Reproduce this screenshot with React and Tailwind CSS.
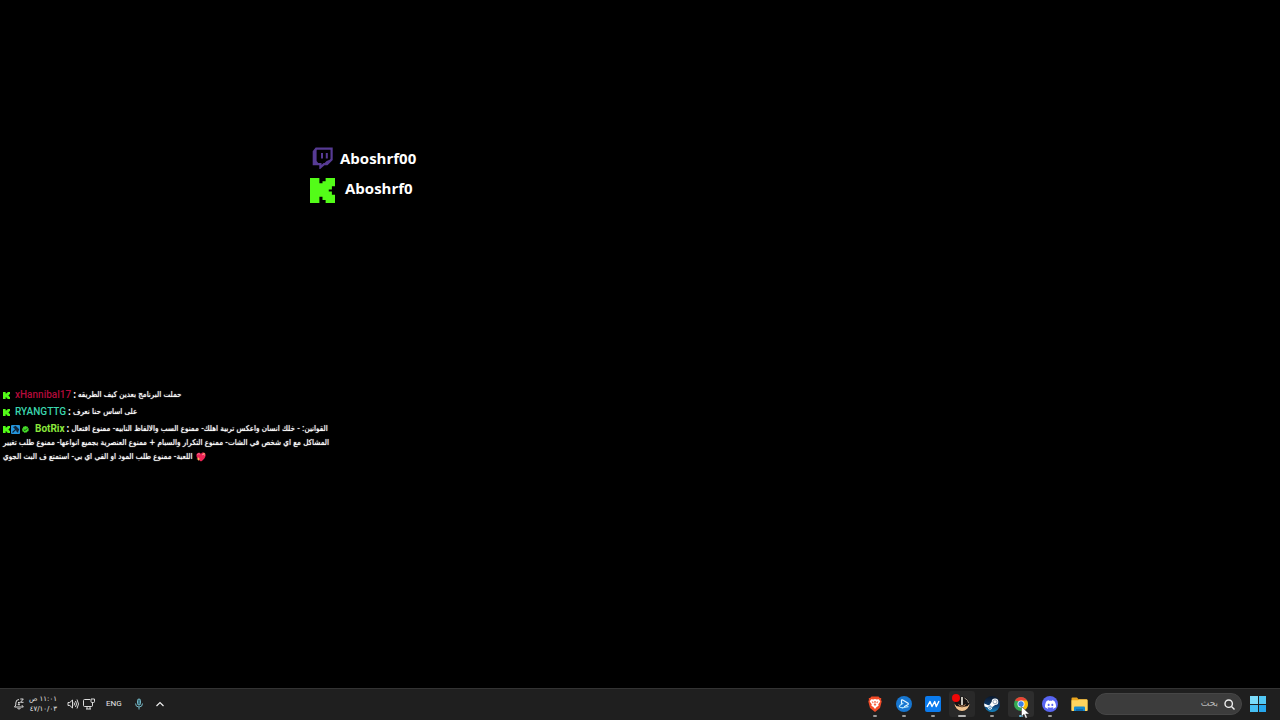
import React from "react";
import { SiDiscord } from "react-icons/si";

function KickIcon({ className }) {
  return (
    <svg viewBox="0 0 24 24" className={className} fill="#53fc18" aria-hidden="true">
      <path d="M0 0h9v5h3V3h3V0h9v8h-3v3h-3v2h3v3h3v8h-9v-3h-3v-3H9v6H0z" />
    </svg>
  );
}

function TwitchIcon() {
  return (
    <svg viewBox="0 0 22 22" className="h-[22px] w-[22px]" fill="none" aria-hidden="true">
      <path d="M4.2 1.6H19.6V12.6L15 17.2H12L8.4 20.4V17.2H1.8V4.6z" stroke="#573b94" strokeWidth="2.2" />
      <path d="M1.6 4.5 4.600 1.500V14L7 17H1.600zM19.600 12l-5 5h-3l3-3z" fill="#573b94" />
      <path d="M10 6v5.600M14.800 6v5.600" stroke="#573b94" strokeWidth="2" />
    </svg>
  );
}

function BotBadge() {
  return (
    <svg viewBox="0 0 9 9" className="h-[9px] w-[9px]" aria-hidden="true">
      <rect width="9" height="9" rx="1" fill="#2494dc" />
      <path d="M1.5 7.5 4.7 4.3M3 2.2l1.5-.7 3 3-.7 1.6zM5.2 5.3l2 2" stroke="#10243b" strokeWidth="1.2" fill="#10243b" />
    </svg>
  );
}

function CheckBadge() {
  return (
    <svg viewBox="0 0 7 7" className="h-[7px] w-[7px]" aria-hidden="true">
      <path d="m3.5 0 1 .6 1.2.1.3 1.2.9.9-.4 1 .1 1.3-1.2.5-.8 1-1.1-.2-1.2.4-.8-1-1.2-.5.1-1.3-.4-1 .9-.9L1.2.8 2.4.6z" fill="#45dc28" />
      <path d="m1.8 3.5 1.2 1.2 2.2-2.3" stroke="#08290a" strokeWidth=".9" fill="none" />
    </svg>
  );
}

function SparkHeart() {
  return (
    <svg viewBox="0 0 10 10" className="h-[10px] w-[10px]" role="img" aria-label="قلب">
      <path d="M5 9.5C2.6 7.9.4 5.8.4 3.4.4 1.6 1.6.7 2.8.7 3.8.7 4.6 1.2 5 2c.5-.9 1.3-1.4 2.3-1.4 1.3 0 2.3 1 2.3 2.6C9.600 5.800 7.400 8 5 9.500z" fill="#ed2455" />
      <path d="M1.5 2.8Q2.300 1 3.800 2.100M6 3l1.500-1 1 1.500" stroke="#ff7d9c" strokeWidth="1" fill="none" />
      <path d="m2.400 5 .6 1.400 1.400.6-1.400.6-.6 1.400-.6-1.400L.4 7l1.400-.6zM8 .5l.4.9.9.4-.9.4-.4.9-.4-.9-.9-.4.900-.4z" fill="#ffb65c" />
    </svg>
  );
}

function ChatMessage({ badges, name, nameClass, lines, heart }) {
  return (
    <li className="whitespace-nowrap">
      {lines.map((line, i) => (
        <div key={line} className="flex h-[14px] items-center">
          {i === 0 && (
            <>
              <span className="mr-[5px] flex items-center gap-px">{badges}</span>
              <span className={nameClass}>{name}</span>
              <span className="mx-[2px]">:</span>
            </>
          )}
          <bdi dir="rtl" className="font-['DejaVu_Sans_Condensed','DejaVu_Sans',sans-serif] text-[8px] font-normal [text-shadow:0_0_1px_#fff]">{line}</bdi>
          {heart && i === lines.length - 1 && <span className="ml-1"><SparkHeart /></span>}
        </div>
      ))}
    </li>
  );
}

function BraveIcon() {
  return (
    <svg viewBox="0 0 14 16" className="h-4 w-[14px]" aria-hidden="true">
      <path d="M3.500.4h7l1.400 1.500 1.300.2-.1 2 .6 1.500-1.700 6.500L7 15.900 2 12.100.3 5.600l.6-1.500-.1-2 1.300-.2z" fill="#f34b27" />
      <path d="m3.200 3.200 2.100.4L7 3l1.700.6 2.100-.4 1.500 2.300-2 2.700.3 1.500-2 1.300L7 13l-1.600-2-2-1.300.3-1.500-2-2.700z" fill="#fff" />
      <path d="m3.600 5.200 2 .8-.6 1.500zM10.400 5.200l-2 .8.6 1.500zM6.300 5h1.400l-.4 3 1.200.8L7 9.800l-1.500-1L6.700 8z" fill="#f34b27" />
    </svg>
  );
}

function BattleIcon() {
  return (
    <svg viewBox="0 0 16 16" className="h-4 w-4" aria-hidden="true">
      <circle cx="8" cy="8" r="8" fill="#1777d2" />
      <path d="M5.500 8.500V4.700q0-1.300 1.200-.6l5 3q1.200.8 0 1.600L8.500 10.500" stroke="#e8f8ff" strokeWidth="1.200" fill="none" strokeLinecap="round" />
      <path d="M7 7.200 3.800 9.500q-1.300 1.600.8 1.900l3 .1M5.500 11.500q.5 1 1.600.3l5-1.200" stroke="#a8defa" strokeWidth="1.100" fill="none" strokeLinecap="round" />
    </svg>
  );
}

function WaveIcon() {
  return (
    <svg viewBox="0 0 16 16" className="h-4 w-4" aria-hidden="true">
      <rect width="16" height="16" rx="2" fill="#0b7bed" />
      <path d="M2 11 5 5.500 7 10.500 9.700 5.500 11.300 10.500 14 5" stroke="#fff" strokeWidth="1.400" fill="none" strokeLinejoin="round" />
    </svg>
  );
}

function GameIcon() {
  return (
    <span className="relative">
      <svg viewBox="0 0 16 16" className="h-4 w-4" aria-hidden="true">
        <circle cx="8" cy="8" r="7.500" fill="#171414" />
        <path d="M.5 7.500Q2 11 5 10.500q3 1.500 6 0Q14 11 15.500 7.500A7.500 7.500 0 0 1 .5 7.500z" fill="#efc28f" />
        <path d="M4.500 8.500Q8 12 11.500 8.500" stroke="#c88b58" fill="none" />
        <path d="M8 1v8" stroke="#f5f2e8" strokeWidth="1.600" />
        <path d="M10.500 2q4 2 4 5" stroke="#a49b8d" fill="none" />
      </svg>
      <span className="absolute -left-[2px] -top-[2px] h-2 w-2 rounded-full bg-[#f00707]" />
    </span>
  );
}

function SteamIcon() {
  return (
    <svg viewBox="0 0 16 16" className="h-4 w-4" aria-hidden="true">
      <defs>
        <linearGradient id="steam-blue" x1="0" y1="0" x2="0" y2="1">
          <stop offset="0" stopColor="#0b1729" />
          <stop offset=".6" stopColor="#0d3d72" />
          <stop offset="1" stopColor="#1688c4" />
        </linearGradient>
      </defs>
      <circle cx="8" cy="8" r="8" fill="url(#steam-blue)" />
      <path d="M.2 7.600 4.300 9.200l1.400-.5 2-2.900a3.300 3.300 0 1 1 3.400 3.300L8.300 11.100a2.300 2.300 0 0 1-4.600.5L.6 10.400A8 8 0 0 1 .2 7.600z" fill="#fff" />
      <circle cx="11" cy="5.800" r="2" fill="none" stroke="#6b8199" strokeWidth=".7" />
      <circle cx="6" cy="11.200" r="1.300" fill="none" stroke="#1d67a3" strokeWidth=".7" />
    </svg>
  );
}

function ChromeIcon() {
  return (
    <span className="relative">
      <svg viewBox="0 0 14 14" className="h-[14px] w-[14px]" aria-hidden="true">
        <circle cx="7" cy="7" r="7" fill="#34a853" />
        <path d="M7 7 .94 3.500A7 7 0 0 1 13.060 3.500z" fill="#ea4335" />
        <path d="M7 3.500h6.060A7 7 0 0 1 7 14l3-5.300z" fill="#fbbc05" />
        <path d="M.94 3.500 4 8.700 7 5z" fill="#34a853" />
        <circle cx="7" cy="7" r="3.500" fill="#fff" />
        <circle cx="7" cy="7" r="2.700" fill="#3b82e8" />
      </svg>
      <svg viewBox="0 0 9 13" className="absolute left-[7px] top-[9px] z-10 h-[13px] w-[9px]" aria-hidden="true">
        <path d="M.5.500v10L3 8.300l1.600 4 1.700-.8-1.600-3.600h3.500z" fill="#fff" stroke="#222" strokeWidth=".4" />
      </svg>
    </span>
  );
}

function DiscordIcon() {
  return (
    <span className="flex h-4 w-4 items-center justify-center rounded-full bg-[#5865f2] text-white">
      <SiDiscord size={11} aria-hidden="true" />
    </span>
  );
}

function FolderIcon() {
  return (
    <svg viewBox="0 0 17 15" className="h-[15px] w-[17px]" aria-hidden="true">
      <path d="M.5 1.500q0-1 1-1H6l1.500 1.700h8q1 0 1 1V13H.5z" fill="#eaa51f" />
      <path d="M.5 3.200H7l1-.6h7.500q1 0 1 1V14H.5z" fill="#ffd45e" />
      <path d="M4 9.500h9q1 0 1 1V14H3v-3.500q0-1 1-1z" fill="#1689cf" />
      <path d="M5 12h7v2H5z" fill="#106bab" />
    </svg>
  );
}

const apps = [
  { label: "Brave", icon: <BraveIcon />, mark: "bg-[#9a9a9a] w-1" },
  { label: "Battle.net", icon: <BattleIcon />, mark: "bg-[#9a9a9a] w-1" },
  { label: "Wave", icon: <WaveIcon />, mark: "bg-[#9a9a9a] w-1" },
  { label: "Game", icon: <GameIcon />, cell: "bg-[#292929]", mark: "bg-[#b5b5b5] w-2" },
  { label: "Steam", icon: <SteamIcon />, mark: "bg-[#9a9a9a] w-1" },
  { label: "Chrome", icon: <ChromeIcon />, cell: "bg-[#2d2d2d]", mark: "bg-[#65b9dc] w-1" },
  { label: "Discord", icon: <DiscordIcon />, mark: "bg-[#9a9a9a] w-1" },
  { label: "Explorer", icon: <FolderIcon />, mark: "w-1" },
];

function BellIcon() {
  return (
    <svg viewBox="0 0 12 12" className="h-3 w-3" fill="none" stroke="#ddd" aria-hidden="true">
      <path d="M6 1.500Q2.800 1.500 2.800 5v2L1.500 9h8.800L9.200 7.500V7M4.500 10.500q1.500 1 3 0M7.300 1h3L7.500 4.300h3M5 4.500h1.700L5 6.700h2" />
    </svg>
  );
}

function SpeakerIcon() {
  return (
    <svg viewBox="0 0 12 12" className="h-3 w-3" fill="none" stroke="#ddd" aria-hidden="true">
      <path d="M1 4.500h1.800L5.500 2v8L2.800 7.500H1zM7 4.500q1 1.500 0 3M8.500 3q2 3 0 6M10 1.500q3 4.500 0 9" />
    </svg>
  );
}

function NetworkIcon() {
  return (
    <svg viewBox="0 0 12 12" className="h-3 w-3" fill="none" stroke="#ddd" aria-hidden="true">
      <path d="M7 1.500H1.500Q.5 1.500.5 2.500v5q0 1 1 1h7q1 0 1-1V6M3 11h5M4 8.500V11M7 8.500V11M8 1h3.500v2.500q0 1-1 1H9q-1 0-1-1zM9.500 4.500v3" />
    </svg>
  );
}

function MicIcon() {
  return (
    <svg viewBox="0 0 10 12" className="h-3 w-[10px]" fill="none" stroke="#74b6c4" aria-hidden="true">
      <rect x="3.500" y="1" width="3" height="6" rx="1.500" fill="#3d7482" />
      <path d="M1.500 5.500Q1.500 9 5 9t3.500-3.500M5 9v2.500" />
    </svg>
  );
}

export default function App() {
  return (
    <div className="flex min-h-screen flex-col bg-black font-['Roboto','DejaVu_Sans',sans-serif] text-white">
      <main className="flex-1">
        <section aria-label="القنوات" className="ml-[310px] mt-[143px] flex w-fit flex-col font-['Open_Sans',sans-serif] text-[15px] font-bold leading-[30px]">
          <div className="flex h-[30px] items-center gap-[6px] pl-[2px]">
            <TwitchIcon />
            <span>Aboshrf00</span>
          </div>
          <div className="flex h-[30px] items-center gap-[10px]">
            <KickIcon className="mt-1 h-[25px] w-[25px]" />
            <span>Aboshrf0</span>
          </div>
        </section>
        <ul aria-label="الدردشة" className="mt-[185px] flex flex-col gap-[3px] pl-[3px] text-[10px] font-bold leading-[14px]">
          <ChatMessage
            badges={<KickIcon className="h-[7px] w-[7px]" />}
            name="xHannibal17"
            nameClass="font-medium text-[#b30b3b]"
            lines={["حملت البرنامج بعدين كيف الطريقه"]}
          />
          <ChatMessage
            badges={<KickIcon className="h-[7px] w-[7px]" />}
            name="RYANGTTG"
            nameClass="font-medium text-[#3bd6ae]"
            lines={["على اساس حنا نعرف"]}
          />
          <ChatMessage
            badges={<><KickIcon className="h-[7px] w-[7px]" /><BotBadge /><span className="px-px"><CheckBadge /></span></>}
            name="BotRix"
            nameClass="text-[#8be83c]"
            lines={[
              "القوانين: - خلك انسان واعكس تربية اهلك- ممنوع السب والالفاظ النابيه- ممنوع افتعال",
              "المشاكل مع اي شخص في الشات- ممنوع التكرار والسبام + ممنوع العنصرية بجميع انواعها- ممنوع طلب تغيير",
              "اللعبة- ممنوع طلب المود او الفي اي بي- استمتع ف البث الجوي",
            ]}
            heart
          />
        </ul>
      </main>

      <footer className="flex h-8 items-center justify-between border-t border-[#333] bg-[#1f1f1f] pb-px pl-[13px] pr-[14px] text-[#e4e4e4]">
        <div className="flex items-center">
          <button className="flex items-center gap-1" aria-label="الإشعارات والوقت">
            <BellIcon />
            <span dir="rtl" className="w-7 whitespace-nowrap text-right font-['DejaVu_Sans',sans-serif] text-[7px] leading-[10px]">
              <span className="block">١١:٠١ ص</span>
              <span className="block">٤٧/١٠/٠٣</span>
            </span>
          </button>
          <button className="ml-[10px] flex gap-1" aria-label="الصوت والشبكة">
            <SpeakerIcon />
            <NetworkIcon />
          </button>
          <button className="ml-[11px] text-[8px]">ENG</button>
          <button className="ml-3" aria-label="الميكروفون"><MicIcon /></button>
          <button className="ml-3" aria-label="إظهار الرموز المخفية">
            <svg viewBox="0 0 8 6" className="h-[6px] w-2" fill="none" stroke="#eee" strokeWidth="1.200" aria-hidden="true">
              <path d="m.500 5 3.500-3.500L7.500 5" />
            </svg>
          </button>
        </div>

        <div className="flex items-center">
          <nav aria-label="التطبيقات" className="mr-px grid w-[234px] grid-cols-8">
            {apps.map((app) => (
              <button
                key={app.label}
                aria-label={app.label}
                className={`relative flex h-[26px] items-center justify-center justify-self-center rounded-[3px] w-[26px] ${app.cell || ""}`}
              >
                {app.icon}
                <span className={`absolute bottom-0 h-[2px] rounded-full ${app.mark}`} />
              </button>
            ))}
          </nav>
          <label dir="rtl" className="flex h-[22px] w-[147px] items-center gap-[6px] rounded-full border border-[#464646] bg-[#3c3c3c] pr-[6px]">
            <svg viewBox="0 0 11 11" className="h-[11px] w-[11px] shrink-0" fill="none" stroke="#eee" strokeWidth="1.400" aria-hidden="true">
              <circle cx="4.700" cy="4.700" r="3.700" />
              <path d="m7.500 7.500 3 3" />
            </svg>
            <input
              type="text"
              aria-label="بحث"
              placeholder="بحث"
              className="w-full min-w-0 bg-transparent font-['DejaVu_Sans',sans-serif] text-[9px] outline-none placeholder:text-[#b8b8b8]"
            />
          </label>
          <button aria-label="ابدأ" className="ml-2 grid h-4 w-4 grid-cols-2 gap-px">
            <span className="bg-[#7bdcfa]" />
            <span className="bg-[#52c8f5]" />
            <span className="bg-[#47c0f3]" />
            <span className="bg-[#26a7ed]" />
          </button>
        </div>
      </footer>
    </div>
  );
}
